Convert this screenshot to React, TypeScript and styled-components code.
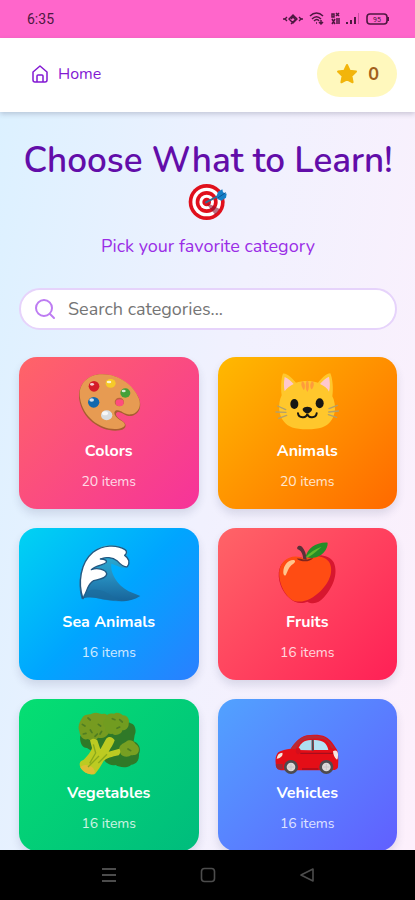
import React from "react";
import styled, { createGlobalStyle } from "styled-components";

const GlobalStyle = createGlobalStyle`
  *, *::before, *::after { box-sizing: border-box; }
  body {
    margin: 0;
    font-family: "Nunito", "Lato", "Open Sans", sans-serif;
    background: #000;
  }
`;

const Shell = styled.div`
  height: 100vh;
  display: flex;
  flex-direction: column;
`;

const StatusBar = styled.div`
  flex: none;
  height: 38px;
  padding: 0 25px 0 27px;
  display: flex;
  align-items: center;
  justify-content: space-between;
  background: #ff66cb;
  color: #4d1840;
  font: 14px/20px "Roboto", sans-serif;
`;

const StatusIcons = styled.div`
  display: flex;
  align-items: center;
  gap: 6px;

  svg { display: block; }
`;

const Header = styled.header`
  flex: none;
  z-index: 1;
  display: flex;
  align-items: center;
  justify-content: space-between;
  padding: 13px 18px 15px 31px;
  background: #fff;
  box-shadow: 0 2px 5px rgba(60, 60, 90, 0.24);
`;

const HomeLink = styled.a`
  display: flex;
  align-items: center;
  gap: 9px;
  color: #8318d3;
  font-size: 16px;
  line-height: 24px;
  text-decoration: none;
`;

const ScorePill = styled.div`
  display: flex;
  align-items: center;
  gap: 9px;
  height: 46px;
  padding: 0 18px;
  border-radius: 23px;
  background: #fff8bd;
  color: #a2601c;
  font-size: 18px;
  font-weight: 700;
`;

const Main = styled.main`
  flex: 1;
  min-height: 0;
  overflow-y: auto;
  scrollbar-width: none;
  padding: 28px 18px 20px 19px;
  background: linear-gradient(100deg, #dcf1ff 0%, #f1f1fe 50%, #fdf0fc 100%);
`;

const Intro = styled.div`
  text-align: center;
`;

const Title = styled.h1`
  margin: 0;
  color: #620da9;
  font-size: 35px;
  font-weight: 600;
  line-height: 42px;

  svg { display: block; margin: 0 auto; }
`;

const Subtitle = styled.p`
  margin: 10px 0 0;
  color: #9a2de6;
  font-size: 18px;
  line-height: 28px;
`;

const SearchBox = styled.label`
  display: flex;
  align-items: center;
  gap: 12px;
  height: 42px;
  margin: 28px 0 27px;
  padding: 0 14px 0 13px;
  border: 2px solid #e6d3fb;
  border-radius: 21px;
  background: #fff;

  svg { flex: none; }
`;

const SearchInput = styled.input`
  flex: 1;
  min-width: 0;
  padding: 0;
  border: 0;
  outline: 0;
  background: transparent;
  color: #444;
  font: inherit;
  font-size: 18px;
  line-height: 28px;

  &::placeholder { color: #757575; opacity: 1; }
`;

const Grid = styled.div`
  display: grid;
  grid-template-columns: repeat(2, 1fr);
  gap: 19px;
`;

const Card = styled.button<{ $fill: string }>`
  display: flex;
  flex-direction: column;
  align-items: center;
  padding: 13px 12px 16px;
  border: 0;
  border-radius: 18px;
  background: linear-gradient(135deg, ${(p) => p.$fill});
  box-shadow: 0 5px 8px rgba(50, 60, 100, 0.14);
  color: #fff;
  font-family: inherit;
  cursor: pointer;
`;

const CardTitle = styled.span`
  margin-top: 5px;
  font-size: 16px;
  font-weight: 700;
  line-height: 24px;
`;

const CardCount = styled.span`
  margin-top: 8px;
  font-size: 14px;
  line-height: 22px;
  opacity: 0.8;
`;

const NavBar = styled.nav`
  flex: none;
  z-index: 1;
  height: 50px;
  display: flex;
  align-items: center;
  justify-content: center;
  gap: 75px;
  background: #000;
`;

const NavButton = styled.button`
  display: grid;
  place-items: center;
  width: 24px;
  height: 24px;
  padding: 0;
  border: 0;
  background: none;
  color: #4c4c4c;
`;

const TargetIcon = () => (
  <svg width="40" height="40" viewBox="568 155 120 120" aria-hidden="true">
    <circle cx="624" cy="215" r="54" fill="#e0101c" />
    <circle cx="624" cy="215" r="43" fill="#fff" />
    <circle cx="624" cy="215" r="33" fill="#e0101c" />
    <circle cx="624" cy="215" r="22" fill="#fff" />
    <circle cx="624" cy="215" r="13" fill="#e0101c" />
    <path d="M628 219 663 236 650 254 626 224z" fill="#8e1430" opacity=".6" />
    <path d="M622 216 662 195" stroke="#356a93" strokeWidth="6" strokeLinecap="round" />
    <path d="M654 197 658 184 671 177 673 186 684 190 682 202 668 211 656 206z" fill="#1680c7" />
    <path d="M657 203 681 187" stroke="#0c5795" strokeWidth="3" />
  </svg>
);

const PaletteIcon = () => (
  <svg width="64" height="64" viewBox="200 60 192 192" aria-hidden="true">
    <path d="M207 150C200 108 230 74 272 73c52-2 99 35 115 75 8 26-3 46-24 50-18 3-29-14-41-12-10 4-5 15 10 24 20 12 18 26-4 31-50 8-112-31-121-91z" fill="#a85d31" />
    <path d="M209 144C202 104 232 73 274 73c52-1 96 33 112 73 8 24-3 44-24 47-19 3-31-16-44-12-12 5-5 20 11 29 22 11 18 22-3 26-49 8-108-31-117-92z" fill="#e79b52" />
    <ellipse cx="327" cy="156" rx="14" ry="13" fill="#bd633c" />
    <ellipse cx="328" cy="158" rx="12" ry="10" fill="#ff4c7e" />
    <ellipse cx="251" cy="109" rx="16" ry="16" fill="#d51d29" />
    <ellipse cx="301" cy="100" rx="15" ry="13" fill="#f6ca29" />
    <ellipse cx="345" cy="129" rx="15" ry="14" fill="#43a138" />
    <ellipse cx="250" cy="157" rx="17" ry="16" fill="#1268ae" />
    <ellipse cx="289" cy="196" rx="17" ry="15" fill="#d9dde0" />
    <g fill="#fff" opacity=".8">
      <ellipse cx="245" cy="103" rx="6" ry="4" />
      <ellipse cx="296" cy="96" rx="7" ry="4" />
      <ellipse cx="340" cy="123" rx="6" ry="4" />
      <ellipse cx="244" cy="150" rx="7" ry="5" />
      <ellipse cx="284" cy="190" rx="9" ry="6" />
    </g>
  </svg>
);

const CatIcon = () => (
  <svg width="64" height="64" viewBox="195 60 192 192" aria-hidden="true">
    <path d="M215 136C211 108 215 78 219 71c13-2 29 16 39 27 19-7 47-7 66 0 11-12 23-27 37-28 6 13 10 44 6 69 12 24 11 56-5 75-13 17-33 24-71 24s-57-7-70-24c-16-19-18-52-6-78z" fill="#ffc72c" />
    <path d="M224 81c-3 16-3 30 0 43 5-9 16-17 27-22-7-7-17-17-27-21zM357 80c-10 4-19 13-27 22 12 5 23 13 27 23 4-14 3-31 0-45z" fill="#ffc8cc" />
    <path d="M278 93c-6 6-5 14 0 22 2 6 5 6 6 0 2-9 0-16-6-22zM290 92c-4 10-4 24 2 34 6-10 6-24 2-34zM307 93c-6 6-8 13-5 21 2 5 4 5 6 0 5-8 5-16-1-21z" fill="#ff9b3c" />
    <ellipse cx="253" cy="162" rx="12" ry="15" fill="#171714" />
    <ellipse cx="329" cy="160" rx="12" ry="15" fill="#171714" />
    <path d="M278 176c5-8 23-8 28 0 1 7-8 13-14 14-6-1-15-7-14-14z" fill="#171714" />
    <path d="M264 190c2 14 25 17 28 1 3 16 26 13 28-1" fill="none" stroke="#171714" strokeWidth="6" strokeLinecap="round" />
    <path d="M203 168 227 179M198 186 228 187M206 205 230 196M382 166 357 176M386 183 356 186M380 202 355 194" fill="none" stroke="#b3a06c" strokeWidth="4" strokeLinecap="round" />
  </svg>
);

const WaveIcon = () => (
  <svg width="64" height="64" viewBox="200 63 192 192" aria-hidden="true">
    <defs>
      <linearGradient id="sea" x1="0" y1="0" x2="0" y2="1">
        <stop offset="0" stopColor="#28badb" />
        <stop offset=".55" stopColor="#278fc0" />
        <stop offset="1" stopColor="#17649a" />
      </linearGradient>
    </defs>
    <path d="M214 237C200 191 207 124 252 91c28-20 66-21 92-4 11 8 8 16 4 22 11 10 10 27 0 34-13 3-31-8-45-12-4 27 15 62 52 83l35 14c-27 17-53 18-91 13-36-6-63-14-85-4z" fill="url(#sea)" />
    <path d="M218 236C202 189 210 129 248 97c29-23 72-24 96-8 7 5 5 12-1 17 13 9 16 22 8 34-10 3-22-8-31-18-8-6-16-8-24-9-9-1-20 1-26 4 15 0 21 5 17 11-7 8-31 7-44 21 15-6 43-3 46 12 1 15-27 17-39 21-18 8-20 33-32 54z" fill="#fff" stroke="#225882" strokeWidth="4" strokeLinejoin="round" />
    <path d="M219 225c23-26 57-20 92 7 20 11 43 11 63 2-28 15-78 10-112 1-21-6-34-5-43-1z" fill="#1b6b9d" opacity=".55" />
  </svg>
);

const AppleIcon = () => (
  <svg width="64" height="64" viewBox="195 63 192 192" aria-hidden="true">
    <path d="M287 117c26-18 71-15 84 10 16 36-5 78-29 105-15 18-34 22-50 13-17 8-40 4-53-10-26-20-38-61-31-87 8-31 45-47 79-31z" fill="#d7172f" />
    <path d="M286 117c28-16 63-8 73 12 14 31-7 64-27 84-25 23-50 37-79 30-27-12-48-54-45-88 3-36 39-58 78-38z" fill="#ff4c13" />
    <path d="M260 116c16 12 39 10 50-2-15 2-17 6-24 6s-12-6-26-4z" fill="#81251d" />
    <path d="M290 120c-1-17-5-30-14-40-9-7-18 2-13 8 10 3 15 12 17 30z" fill="#593238" />
    <path d="M287 112c4-26 31-46 66-44 1 20-18 43-43 45-9 2-17-1-23-1z" fill="#248d28" />
    <path d="M288 111c12-14 27-24 47-31-12 11-25 23-41 32z" fill="#62b92c" />
    <path d="M252 120c-17-2-31 15-32 34-1 10 4 17 8 10 7-13 8-23 20-31 7-5 10-10 4-13z" fill="#ffc58d" />
  </svg>
);

const BroccoliIcon = () => (
  <svg width="64" height="64" viewBox="200 66 192 192" aria-hidden="true">
    <path d="M326 94c11-7 26-3 33 5 17 3 20 24 14 36l-3 19c18 7 22 25 16 38 1 19-8 31-23 32-13 12-36 8-47 1-16 3-30-5-36-19l-50-32c-16 0-23-20-20-37z" fill="#2f7928" />
    <path d="M207 124c-7-16 3-30 8-39 7-15 22-10 29-14 16-7 24 1 31 1 13-4 20 5 20 15 14 9 13 29 1 38-3 15-21 22-33 18-7 11-20 11-30 4-14 5-24-7-26-23z" fill="#769b20" />
    <path d="M286 86c1-16 16-17 25-15 9-6 21 0 26 5 15-1 22 14 18 25 1 12-9 20-19 20-1 12-21 18-30 10-14 4-25-9-21-19-9-8-9-20 1-26z" fill="#719c20" />
    <path d="M326 179c1-15 11-18 21-24 11-9 23-3 29 7 12 7 13 23 3 31-8 5-16 0-22 6-11 4-24-1-27-9z" fill="#779f22" />
    <path d="M239 151c8-8 17-5 22 0l9 27c5-9 11-20 17-31 9-11 21-5 26 4-3 11-12 23-18 34l32-9c5 7 3 15-2 20-20 4-37 9-45 17-9 15-15 26-26 39-13 5-32-2-44-20-5-13 0-20 10-23 15-14 22-26 25-35z" fill="#bccb22" />
    <path d="M210 232c9-11 25-8 35-1 7 6 10 13 7 20-15 5-35-4-42-19z" fill="#dfbd35" />
    <path d="M249 163l7 26-18 31M266 198l-33 33M290 193l-26 26" fill="none" stroke="#8ba91b" strokeWidth="4" />
    <path d="M216 103l8 5M233 84l7 6M240 120l5 8M264 103l7 5M219 132l8-2M254 139l7-7M274 124l-5 8M306 86l8 3M320 115l8-4M328 89l8 7M353 177l8 5" stroke="#4f7d22" strokeWidth="5" strokeLinecap="round" />
  </svg>
);

const CarIcon = () => (
  <svg width="64" height="64" viewBox="195 66 192 192" aria-hidden="true">
    <path d="M242 176c15-21 29-36 48-40 19-3 44-2 56 4 18 9 26 26 35 39 5 12 4 35 3 53-3 9-15 9-26 9H222c-21 1-25-8-25-22-2-15 2-26 9-33 8-5 22-8 36-10z" fill="#e40e17" />
    <path d="M242 177c15-24 32-38 51-40 17-2 40 0 49 4 14 8 25 23 33 37l-11-4c-4-11-14-23-23-26-18-4-47-4-61 4-11 6-17 15-23 25z" fill="#b82a36" />
    <path d="M264 180c5-19 18-31 41-30v31z" fill="#addff0" />
    <path d="M311 150c27-1 40 9 44 30h-43z" fill="#b4e3f4" />
    <path d="M308 149v33" stroke="#39535b" strokeWidth="5" />
    <path d="M258 180c1-8 10-9 13-2 2 9-1 12-6 15-7-1-9-7-7-13z" fill="#d40e1c" />
    <path d="M271 190h98M276 237h49" stroke="#a60d1c" strokeWidth="4" />
    <path d="M200 206c2-12 7-18 17-18 3 8-4 16-17 18zM369 184c8-5 14-1 15 8 0 8 0 14-3 17-8-5-11-15-12-25z" fill="#f6e6df" />
    <path d="M198 222h20v16h-14c-6-5-7-10-6-16z" fill="#9d2a35" />
    <circle cx="243" cy="231" r="21" fill="#4e4b4e" />
    <circle cx="349" cy="231" r="21" fill="#4e4b4e" />
    <circle cx="243" cy="231" r="13" fill="#ddd9d9" />
    <circle cx="349" cy="231" r="13" fill="#ddd9d9" />
    <path d="M234 231h18M243 222v18M340 231h18M349 222v18" stroke="#c9c5c7" strokeWidth="3" />
  </svg>
);

const categories = [
  { name: "Colors", count: 20, fill: "#ff6467, #f6339a", Icon: PaletteIcon },
  { name: "Animals", count: 20, fill: "#ffb900, #ff6900", Icon: CatIcon },
  { name: "Sea Animals", count: 16, fill: "#00d3f2, #00a5ff 50%, #2b7fff", Icon: WaveIcon },
  { name: "Fruits", count: 16, fill: "#ff6467, #ff2056", Icon: AppleIcon },
  { name: "Vegetables", count: 16, fill: "#05df72, #00bc7d", Icon: BroccoliIcon },
  { name: "Vehicles", count: 16, fill: "#51a2ff, #615fff", Icon: CarIcon },
];

export default function App() {
  return (
    <>
      <GlobalStyle />
      <Shell>
        <StatusBar>
          <span>6:35</span>
          <StatusIcons aria-hidden="true">
            <svg width="20" height="14" viewBox="0 0 20 14" fill="none" stroke="currentColor" strokeWidth="1.4">
              <path d="M6 7l4-4 4 4-4 4zM8 7l2-2 2 2M8 12l6-6M4 5L2 7l2 2M16 5l2 2-2 2" />
              <path d="M0 7h2M18 7h2" />
            </svg>
            <svg width="16" height="14" viewBox="0 0 16 14" fill="none" stroke="currentColor" strokeWidth="1.5">
              <path d="M1 4c4-4 9-4 13 0M3 7c3-3 6-3 9 0M5 9c2-2 4-2 5 0M7 11h1M12 8v4M10 10l2 2 2-2" />
            </svg>
            <svg width="9" height="14" viewBox="0 0 9 14" fill="none" stroke="currentColor" strokeWidth="1.5">
              <path d="M1 2h2v3H1zM5 1l3 3M8 1L5 4M1 7l3 5M4 7l-3 5M6 6v6M8 6v6" />
            </svg>
            <svg width="14" height="12" viewBox="0 0 14 12" fill="currentColor">
              <path d="M0 9h2v2H0zM4 7h2v4H4zM8 4h2v7H8z" />
              <path d="M12 0h1v11h-1z" opacity=".3" />
            </svg>
            <svg width="24" height="14" viewBox="0 0 24 14">
              <rect x="1" y="2" width="20" height="10" rx="3" fill="none" stroke="currentColor" strokeWidth="1.6" />
              <path d="M22 5v4" stroke="currentColor" strokeWidth="2" />
              <text x="11" y="10" fontSize="7" textAnchor="middle" fill="currentColor">95</text>
            </svg>
          </StatusIcons>
        </StatusBar>

        <Header>
          <HomeLink href="#">
            <svg width="18" height="18" viewBox="0 0 18 18" fill="none" stroke="currentColor" strokeWidth="1.5" strokeLinejoin="round" strokeLinecap="round" aria-hidden="true">
              <path d="M2 7l7-6 7 6v8q0 2-2 2H4q-2 0-2-2zM6 17v-6q0-1 1-1h4q1 0 1 1v6" />
            </svg>
            Home
          </HomeLink>
          <ScorePill>
            <svg width="24" height="24" viewBox="0 0 24 24" fill="#f2b50b" stroke="#f2b50b" strokeWidth="2" strokeLinejoin="round" aria-label="Stars">
              <path d="M12 3l2.7 5.7 6.3.9-4.6 4.4 1.2 6.3L12 17.3l-5.6 3 1.2-6.3L3 9.6l6.3-.9z" />
            </svg>
            0
          </ScorePill>
        </Header>

        <Main>
          <Intro>
            <Title>
              Choose What to Learn! <TargetIcon />
            </Title>
            <Subtitle>Pick your favorite category</Subtitle>
          </Intro>
          <SearchBox>
            <svg width="22" height="22" viewBox="0 0 22 22" fill="none" stroke="#bd7cf2" strokeWidth="2" strokeLinecap="round" aria-hidden="true">
              <circle cx="10" cy="10" r="8" />
              <path d="M16 16l4 4" />
            </svg>
            <SearchInput type="text" placeholder="Search categories..." aria-label="Search categories" />
          </SearchBox>
          <Grid>
            {categories.map(({ name, count, fill, Icon }) => (
              <Card key={name} type="button" $fill={fill}>
                <Icon />
                <CardTitle>{name}</CardTitle>
                <CardCount>{count} items</CardCount>
              </Card>
            ))}
          </Grid>
        </Main>

        <NavBar>
          <NavButton type="button" aria-label="Recent apps">
            <svg width="16" height="16" viewBox="0 0 16 16" stroke="currentColor" strokeWidth="2">
              <path d="M1 2h14M1 8h14M1 14h14" />
            </svg>
          </NavButton>
          <NavButton type="button" aria-label="Home screen">
            <svg width="16" height="16" viewBox="0 0 16 16" fill="none" stroke="currentColor" strokeWidth="1.6">
              <rect x="1.5" y="1.5" width="13" height="13" rx="3" />
            </svg>
          </NavButton>
          <NavButton type="button" aria-label="Back">
            <svg width="16" height="16" viewBox="0 0 16 16" fill="none" stroke="currentColor" strokeWidth="1.6" strokeLinejoin="round">
              <path d="M14 2v12L2 8z" />
            </svg>
          </NavButton>
        </NavBar>
      </Shell>
    </>
  );
}
